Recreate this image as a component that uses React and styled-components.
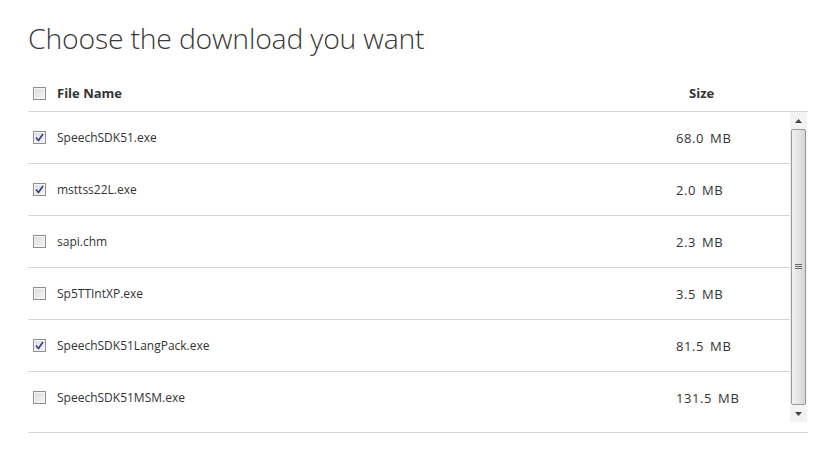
import styled, { createGlobalStyle } from "styled-components";

const GlobalStyle = createGlobalStyle`
  html, body {
    margin: 0;
    padding: 0;
    background: #ffffff;
  }
  body {
    font-family: "Open Sans", "Liberation Sans", sans-serif;
    color: #333333;
  }
`;

const files = [
  { name: "SpeechSDK51.exe", size: "68.0 MB", checked: true },
  { name: "msttss22L.exe", size: "2.0 MB", checked: true },
  { name: "sapi.chm", size: "2.3 MB", checked: false },
  { name: "Sp5TTIntXP.exe", size: "3.5 MB", checked: false },
  { name: "SpeechSDK51LangPack.exe", size: "81.5 MB", checked: true },
  { name: "SpeechSDK51MSM.exe", size: "131.5 MB", checked: false },
];

const Page = styled.div`
  padding: 18px 0 0 28px;
  width: 780px;
`;

const Title = styled.h1`
  margin: 0;
  font-family: "Open Sans", sans-serif;
  font-weight: 300;
  font-size: 28.4px;
  line-height: 40px;
  color: #3a3a3a;
  letter-spacing: -0.2px;
`;

const Table = styled.div`
  margin-top: 19px;
  border-bottom: 1px solid #d6d6d6;
  padding-bottom: 10px;
`;

const HeaderRow = styled.div`
  display: flex;
  align-items: center;
  height: 32px;
  padding-bottom: 2px;
  border-bottom: 1px solid #d6d6d6;
  font-size: 13px;
  font-weight: 700;
  color: #333;
`;

const CheckCell = styled.div`
  width: 29px;
  padding-left: 5px;
  box-sizing: border-box;
  display: flex;
  align-items: center;
`;

const NameCell = styled.div`
  flex: 1;
`;

const SizeCell = styled.div`
  width: ${({ $w }) => $w}px;
`;

const SizeValue = styled(SizeCell)`
  font-size: 13px;
  letter-spacing: 0.6px;
  word-spacing: 2px;
`;

const ScrollBox = styled.div`
  display: flex;
  height: 310px;
`;

const List = styled.div`
  flex: 1;
  overflow: hidden;
`;

const Row = styled.div`
  display: flex;
  align-items: center;
  height: 51px;
  font-size: 12px;
  color: #333;
  &:not(:last-child) {
    border-bottom: 1px solid #d6d6d6;
  }
`;

const Box = styled.span`
  width: 11px;
  height: 11px;
  border: 1px solid #8e8f8f;
  background: linear-gradient(135deg, #dcdcdc 0%, #f4f4f4 100%);
  box-shadow: inset 0 0 0 1px #f5f5f5;
  display: inline-flex;
  align-items: center;
  justify-content: center;
`;

const Scrollbar = styled.div`
  width: 17px;
  margin-right: 1px;
  display: flex;
  flex-direction: column;
  background: #f0f0f0;
`;

const Arrow = styled.div`
  height: 17px;
  display: flex;
  align-items: center;
  justify-content: center;
  background: #f3f3f3;
`;

const Thumb = styled.div`
  flex: 1;
  margin: 0 1px;
  border: 1px solid #9a9a9a;
  border-radius: 2px;
  background: linear-gradient(90deg, #f1f1f1 0%, #e2e2e2 60%, #d4d4d4 100%);
  display: flex;
  align-items: center;
  justify-content: center;
`;

function Checkbox({ checked }) {
  return (
    <Box>
      {checked && (
        <svg width="9" height="9" viewBox="0 0 9 9">
          <path d="M1 4.5 L3.5 7.5 L8 1" fill="none" stroke="#2f3d82" strokeWidth="1.6" />
        </svg>
      )}
    </Box>
  );
}

export default function App() {
  return (
    <>
      <GlobalStyle />
      <Page>
        <Title>Choose the download you want</Title>
        <Table>
          <HeaderRow>
            <CheckCell>
              <Checkbox />
            </CheckCell>
            <NameCell>File Name</NameCell>
            <SizeCell $w={119}>Size</SizeCell>
          </HeaderRow>
          <ScrollBox>
            <List>
              {files.map((f) => (
                <Row key={f.name}>
                  <CheckCell>
                    <Checkbox checked={f.checked} />
                  </CheckCell>
                  <NameCell>{f.name}</NameCell>
                  <SizeValue $w={114}>{f.size}</SizeValue>
                </Row>
              ))}
            </List>
            <Scrollbar>
              <Arrow>
                <svg width="7" height="4" viewBox="0 0 7 4">
                  <path d="M0 4 L3.5 0 L7 4 Z" fill="#444" />
                </svg>
              </Arrow>
              <Thumb>
                <svg width="7" height="6" viewBox="0 0 7 6">
                  <path d="M0 0.5 H7 M0 2.5 H7 M0 4.5 H7" stroke="#666" strokeWidth="1" />
                </svg>
              </Thumb>
              <Arrow>
                <svg width="7" height="4" viewBox="0 0 7 4">
                  <path d="M0 0 L7 0 L3.5 4 Z" fill="#444" />
                </svg>
              </Arrow>
            </Scrollbar>
          </ScrollBox>
        </Table>
      </Page>
    </>
  );
}
